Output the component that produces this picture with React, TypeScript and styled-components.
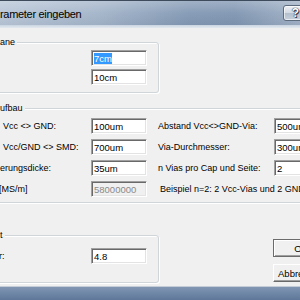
import React from "react";
import styled, { createGlobalStyle } from "styled-components";

const Global = createGlobalStyle`
  html, body { margin: 0; padding: 0; background: #f0f0f0; overflow: hidden; }
  body { font-family: "Liberation Sans", Arial, sans-serif; }
`;

const Viewport = styled.div`
  width: 300px;
  height: 300px;
  overflow: hidden;
`;

const Dialog = styled.div`
  margin-left: -10px;
  width: 360px;
  height: 300px;
  display: flex;
  flex-direction: column;
  font-family: "Liberation Sans", Arial, sans-serif;
  font-size: 9px;
  color: #000;
`;

const TitleBar = styled.div`
  height: 25px;
  box-sizing: border-box;
  display: flex;
  align-items: center;
  padding: 0 42px 0 10px;
  border-top: 1px solid #3e4b5c;
  background:
    linear-gradient(180deg, rgba(255,255,255,0.25) 0%, rgba(255,255,255,0.05) 50%, rgba(0,0,0,0.03) 100%),
    linear-gradient(90deg, #b9c7d8 0%, #a3b4c9 30%, #8298b4 55%, #7f95b1 68%, #a3b3c7 88%, #adbccd 100%);
`;

const TitleText = styled.div`
  flex: 1;
  font-size: 11px;
  letter-spacing: -0.3px;
  color: #000;
  margin-top: 2px;
`;

const HelpButton = styled.div`
  width: 25px;
  height: 16px;
  box-sizing: border-box;
  margin-top: -1px;
  border: 1px solid #5d6b7e;
  border-radius: 3px;
  background: linear-gradient(180deg, #eef1f5 0%, #d3dae3 48%, #b3bfcd 52%, #c6d0dc 100%);
  display: flex;
  align-items: center;
  justify-content: center;
  color: #fff;
  font-weight: bold;
  font-size: 12px;
  text-shadow: 0 0 1px #223, 0 0 1px #223, 1px 1px 0 #445;
  box-shadow: inset 0 0 0 1px rgba(255,255,255,0.6);
`;

const TitleEdge = styled.div`
  height: 3px;
  background: linear-gradient(180deg, #c9d4e1 0%, #e3e9f0 100%);
`;

const Client = styled.div`
  flex: 1;
  background: #f0f0f0;
  display: flex;
  flex-direction: column;
`;

const GroupBox = styled.div<{ $width: number; $top: number; $padBottom: number }>`
  margin-top: ${(p) => p.$top}px;
  margin-left: 2px;
  width: ${(p) => p.$width}px;
  box-sizing: border-box;
  border: 1px solid #d0d5da;
  border-radius: 3px;
  box-shadow: inset 1px 1px 0 #fff, 1px 1px 0 #fff;
  padding-bottom: ${(p) => p.$padBottom}px;
`;

const GroupTitle = styled.div`
  width: fit-content;
  height: 13px;
  line-height: 13px;
  margin: -7px 0 0 6px;
  padding: 0 2px 0 1px;
  background: #f0f0f0;
`;

const StackedFields = styled.div`
  margin: 1px 0 0 98px;
  display: flex;
  flex-direction: column;
  gap: 3px;
`;

const FieldGrid = styled.div<{ $top: number }>`
  margin-top: ${(p) => p.$top}px;
  padding-left: 10px;
  display: grid;
  grid-template-columns: 88px 56px 127px 60px;
  grid-auto-rows: 16px;
  row-gap: 5px;
  align-items: center;
`;

const Label = styled.div<{ $shift?: number; $indent?: number }>`
  white-space: nowrap;
  margin-left: ${(p) => p.$shift ?? 0}px;
  padding-left: ${(p) => p.$indent ?? 0}px;
`;

const Note = styled.div`
  grid-column: 3 / span 2;
  white-space: nowrap;
  padding-left: 13px;
`;

const Input = styled.div<{ $disabled?: boolean; $width?: number }>`
  width: ${(p) => p.$width ?? 56}px;
  height: 16px;
  box-sizing: border-box;
  border: 1px solid;
  border-color: #a0a0a0 #fff #fff #a0a0a0;
  box-shadow: inset 1px 1px 0 #696969, inset -1px -1px 0 #e3e3e3;
  background: ${(p) => (p.$disabled ? "#f0f0f0" : "#fff")};
  color: ${(p) => (p.$disabled ? "#8a8a8a" : "#000")};
  padding: 0 0 0 2px;
  display: flex;
  align-items: center;
  white-space: nowrap;
  overflow: hidden;
  font-size: 9.5px;
`;

const Selected = styled.span`
  background: #3399ff;
  color: #fff;
  line-height: 11px;
`;

const BottomRow = styled.div`
  margin-top: 32px;
  display: flex;
  align-items: flex-start;
`;

const ButtonColumn = styled.div`
  margin: 4px 0 0 114px;
  display: flex;
  flex-direction: column;
  gap: 7px;
`;

const Button = styled.div<{ $default?: boolean }>`
  width: 56px;
  height: 18px;
  box-sizing: border-box;
  display: flex;
  align-items: center;
  justify-content: center;
  background: #f0f0f0;
  font-size: 9.5px;
  border: 1px solid;
  border-color: ${(p) => (p.$default ? "#6b6b6b" : "#fff #696969 #696969 #fff")};
  box-shadow: ${(p) =>
    p.$default
      ? "inset 1px 1px 0 #fff, inset -1px -1px 0 #a0a0a0"
      : "inset -1px -1px 0 #a0a0a0"};
`;

const Group3Row = styled.div`
  margin-top: 6px;
  padding-left: 10px;
  display: grid;
  grid-template-columns: 88px 56px;
  grid-auto-rows: 16px;
  align-items: center;
`;

const BottomFrame = styled.div`
  height: 13px;
  border-top: 1px solid #c4ccd6;
  background: linear-gradient(180deg, #8196b2 0%, #7088a8 45%, #5f7899 100%);
`;

export default function App() {
  return (
    <Viewport>
      <Global />
      <Dialog>
        <TitleBar>
          <TitleText>rameter eingeben</TitleText>
          <HelpButton>?</HelpButton>
        </TitleBar>
        <TitleEdge />
        <Client>
          <GroupBox $width={167} $top={14} $padBottom={7}>
            <GroupTitle>ane</GroupTitle>
            <StackedFields>
              <Input>
                <Selected>7cm</Selected>
              </Input>
              <Input>10cm</Input>
            </StackedFields>
          </GroupBox>

          <GroupBox $width={350} $top={15} $padBottom={5}>
            <GroupTitle>ufbau</GroupTitle>
            <FieldGrid $top={3}>
              <Label>Vcc &lt;&gt; GND:</Label>
              <Input>100um</Input>
              <Label $indent={11}>Abstand Vcc&lt;&gt;GND-Via:</Label>
              <Input $width={60}>500um</Input>

              <Label>Vcc/GND &lt;&gt; SMD:</Label>
              <Input>700um</Input>
              <Label $indent={11}>Via-Durchmesser:</Label>
              <Input $width={60}>300um</Input>

              <Label $shift={-3}>erungsdicke:</Label>
              <Input>35um</Input>
              <Label $indent={11}>n Vias pro Cap und Seite:</Label>
              <Input $width={60}>2</Input>

              <Label $shift={-4}>[MS/m]</Label>
              <Input $disabled>58000000</Input>
              <Note>Beispiel n=2: 2 Vcc-Vias und 2 GND-Vias</Note>
            </FieldGrid>
          </GroupBox>

          <BottomRow>
            <GroupBox $width={167} $top={0} $padBottom={18}>
              <GroupTitle>t</GroupTitle>
              <Group3Row>
                <Label $shift={-4}>r:</Label>
                <Input>4.8</Input>
              </Group3Row>
            </GroupBox>
            <ButtonColumn>
              <Button $default>OK</Button>
              <Button>Abbrechen</Button>
            </ButtonColumn>
          </BottomRow>
        </Client>
        <BottomFrame />
      </Dialog>
    </Viewport>
  );
}
